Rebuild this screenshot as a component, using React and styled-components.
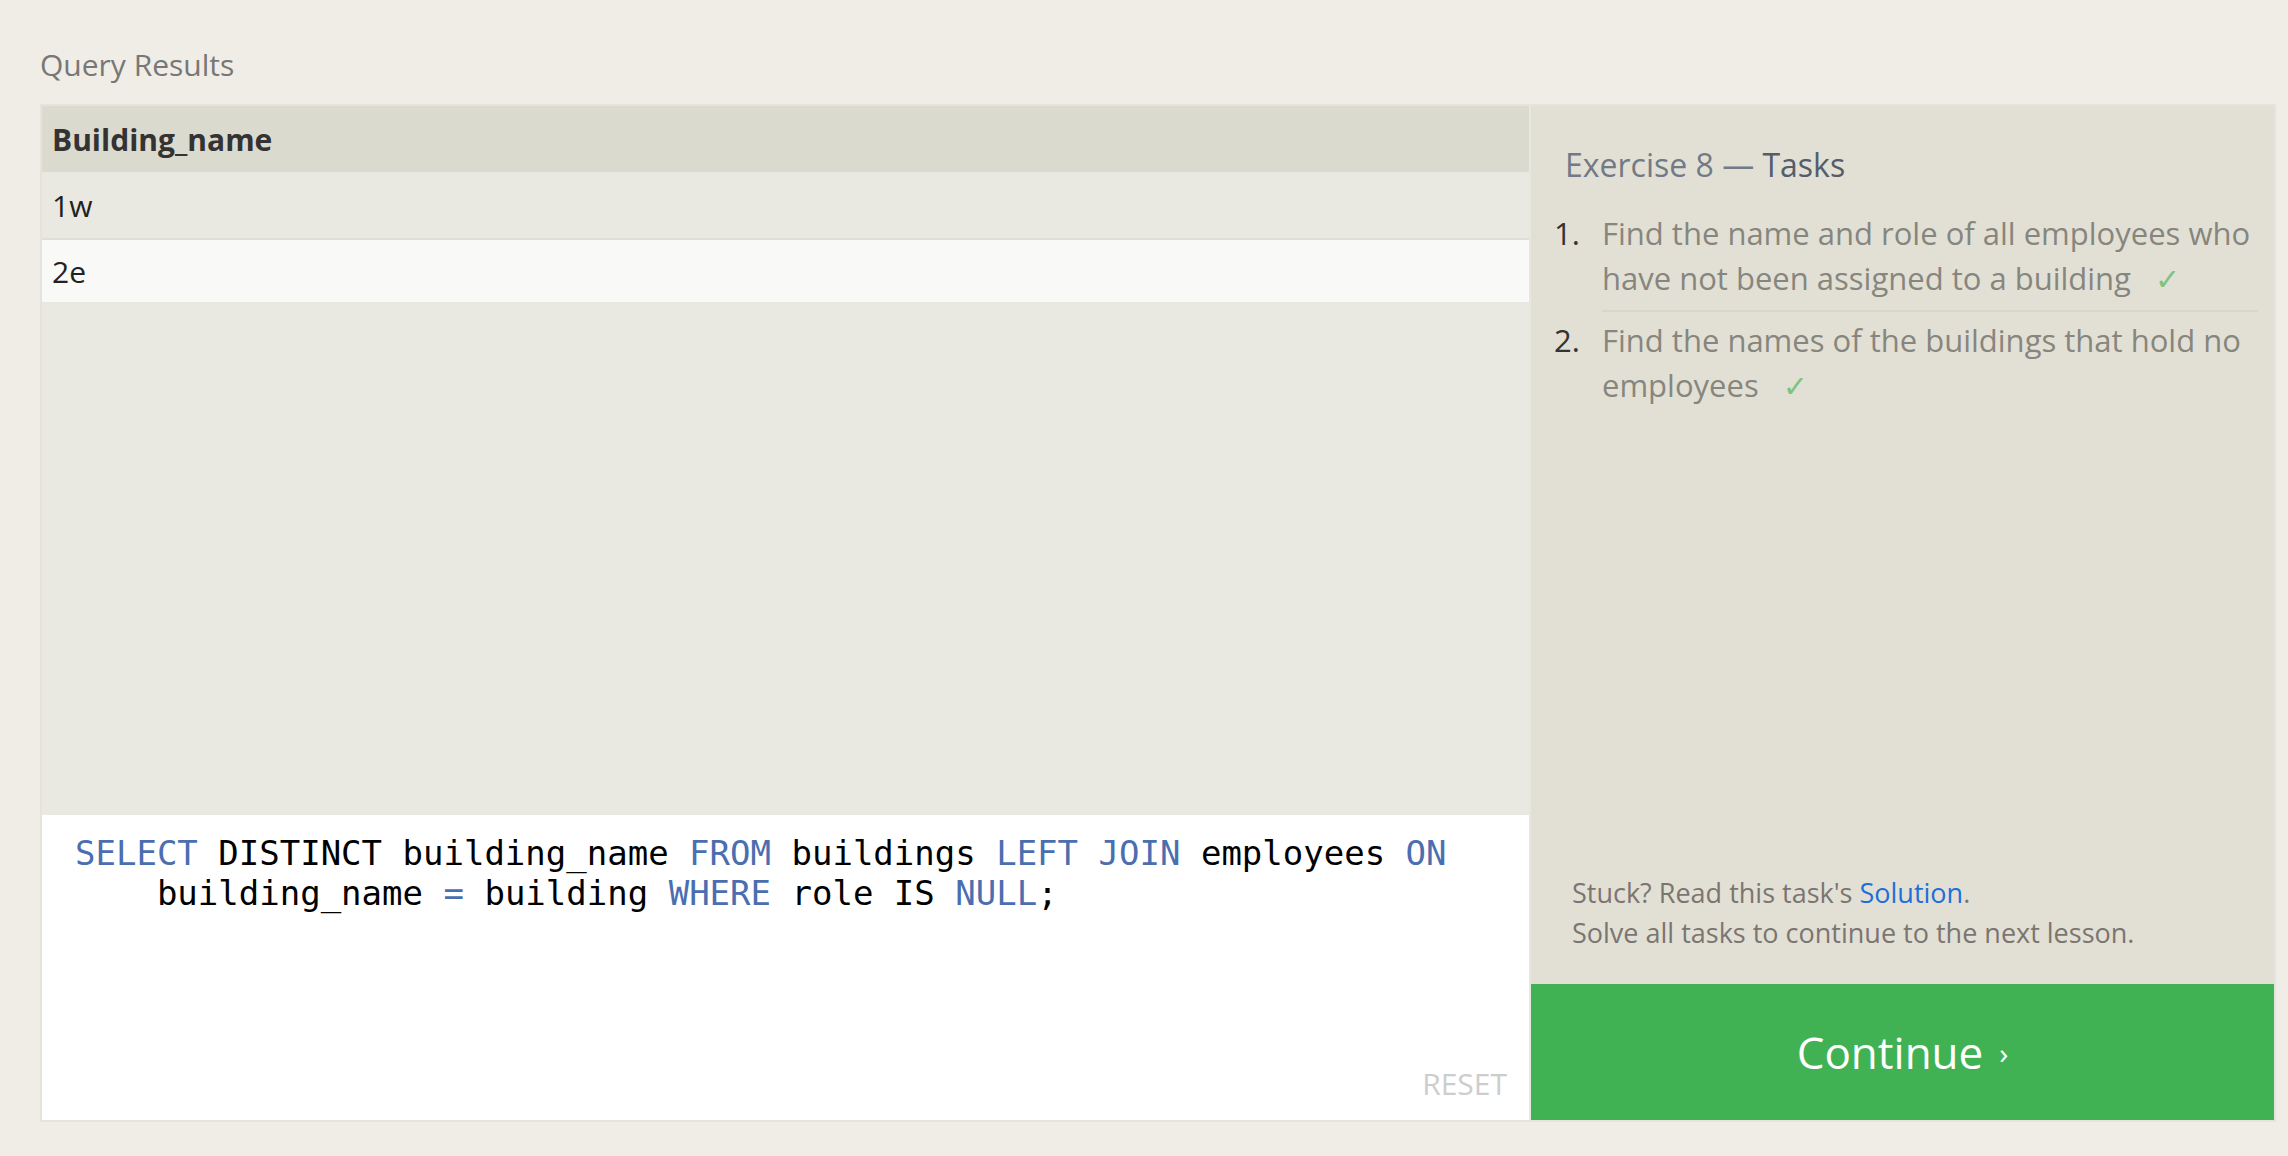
import React from "react";
import styled, { createGlobalStyle } from "styled-components";

const GlobalStyle = createGlobalStyle`
  html, body {
    margin: 0;
    padding: 0;
    background: #efede6;
  }
  body {
    font-family: "Open Sans", "DejaVu Sans", sans-serif;
  }
`;

const Page = styled.div`
  width: 2288px;
  height: 1156px;
  box-sizing: border-box;
  padding: 45px 0 0 40px;
  background: #efede6;
`;

const Heading = styled.h2`
  margin: 0 0 19px;
  font-size: 30px;
  line-height: 40px;
  font-weight: normal;
  color: #777777;
`;

const Board = styled.div`
  width: 2236px;
  height: 1018px;
  box-sizing: border-box;
  border: 2px solid #e5e4dc;
  background: #e8e7df;
  display: grid;
  grid-template-columns: 1487px 743px;
  column-gap: 2px;
`;

const Results = styled.div`
  display: flex;
  flex-direction: column;
  min-height: 0;
`;

const Row = styled.div`
  height: ${(p) => p.h}px;
  display: flex;
  align-items: center;
  padding-left: 10px;
  font-size: 30px;
  font-weight: ${(p) => (p.head ? "bold" : "normal")};
  color: ${(p) => (p.head ? "#333" : "#222")};
  background: ${(p) => p.bg};
  border-bottom: ${(p) => (p.line ? "2px solid #dfded7" : "none")};
`;

const Filler = styled.div`
  flex: 1;
  background: #eae9e1;
`;

const Editor = styled.div`
  height: 305px;
  box-sizing: border-box;
  background: #fff;
  display: flex;
  flex-direction: column;
`;

const Code = styled.div`
  flex: 1;
  padding: 18px 33px 0;
  font-family: "DejaVu Sans Mono", monospace;
  font-size: 34px;
  line-height: 40px;
  color: #000;
  white-space: pre;
`;

const Kw = styled.span`
  color: #4a6eb0;
`;

const EditorFoot = styled.div`
  display: flex;
  justify-content: flex-end;
  padding: 0 22px 18px 0;
`;

const Reset = styled.span`
  font-size: 30px;
  line-height: 36px;
  color: #cdcdcd;
`;

const Side = styled.div`
  display: flex;
  flex-direction: column;
`;

const Tasks = styled.div`
  flex: 1;
  background: #e2e0d5;
  padding: 39px 16px 0 34px;
  display: flex;
  flex-direction: column;
`;

const TaskTitle = styled.h3`
  margin: 0 0 26px;
  font-size: 32px;
  line-height: 40px;
  font-weight: normal;
  color: #727a88;
  span {
    color: #555d6b;
  }
`;

const TaskList = styled.ol`
  list-style: none;
  margin: 0 0 0 -11px;
  padding: 0;
`;

const TaskItem = styled.li`
  display: grid;
  grid-template-columns: 48px 1fr;
  margin-top: ${(p) => (p.first ? 0 : 6)}px;
  font-size: 31px;
  line-height: 45px;
`;

const Num = styled.span`
  color: #333;
`;

const TaskText = styled.span`
  color: #87867e;
  padding-bottom: ${(p) => (p.line ? 9 : 0)}px;
  border-bottom: ${(p) => (p.line ? "2px solid #d7d6cc" : "none")};
`;

const Check = styled.span`
  display: inline-block;
  vertical-align: baseline;
  color: #7dc47f;
  margin-left: 24px;
  font-family: "DejaVu Sans", sans-serif;
  font-size: 30px;
  line-height: 30px;
`;

const Help = styled.div`
  margin-top: auto;
  padding: 0 0 31px 7px;
  font-size: 27px;
  line-height: 40px;
  color: #7b7571;
  a {
    color: #1e6fd9;
    text-decoration: none;
  }
`;

const Continue = styled.button`
  height: 136px;
  border: 0;
  margin: 0;
  background: #41b254;
  color: #fff;
  font-family: "Open Sans", "DejaVu Sans", sans-serif;
  font-size: 44px;
  display: flex;
  align-items: center;
  justify-content: center;
  cursor: pointer;
`;

const Chevron = styled.span`
  font-size: 30px;
  margin-left: 16px;
`;

const tasks = [
  "Find the name and role of all employees who have not been assigned to a building",
  "Find the names of the buildings that hold no employees",
];

export default function App() {
  return (
    <Page>
      <GlobalStyle />
      <Heading>Query Results</Heading>
      <Board>
        <Results>
          <Row head h={66} bg="#dbdacf">
            Building_name
          </Row>
          <Row h={66} bg="#eae9e1" line>
            1w
          </Row>
          <Row h={62} bg="#f9f9f8">
            2e
          </Row>
          <Filler />
          <Editor>
            <Code>
              <Kw>SELECT</Kw> DISTINCT building_name <Kw>FROM</Kw> buildings <Kw>LEFT</Kw>{" "}
              <Kw>JOIN</Kw> employees <Kw>ON</Kw>
              {"\n    "}building_name <Kw>=</Kw> building <Kw>WHERE</Kw> role IS <Kw>NULL</Kw>;
            </Code>
            <EditorFoot>
              <Reset>RESET</Reset>
            </EditorFoot>
          </Editor>
        </Results>
        <Side>
          <Tasks>
            <TaskTitle>
              Exercise 8 — <span>Tasks</span>
            </TaskTitle>
            <TaskList>
              {tasks.map((t, i) => (
                <TaskItem key={i} first={i === 0}>
                  <Num>{i + 1}.</Num>
                  <TaskText line={i < tasks.length - 1}>
                    {t}
                    <Check>✓</Check>
                  </TaskText>
                </TaskItem>
              ))}
            </TaskList>
            <Help>
              Stuck? Read this task's <a href="#">Solution</a>.
              <br />
              Solve all tasks to continue to the next lesson.
            </Help>
          </Tasks>
          <Continue>
            Continue<Chevron>›</Chevron>
          </Continue>
        </Side>
      </Board>
    </Page>
  );
}
